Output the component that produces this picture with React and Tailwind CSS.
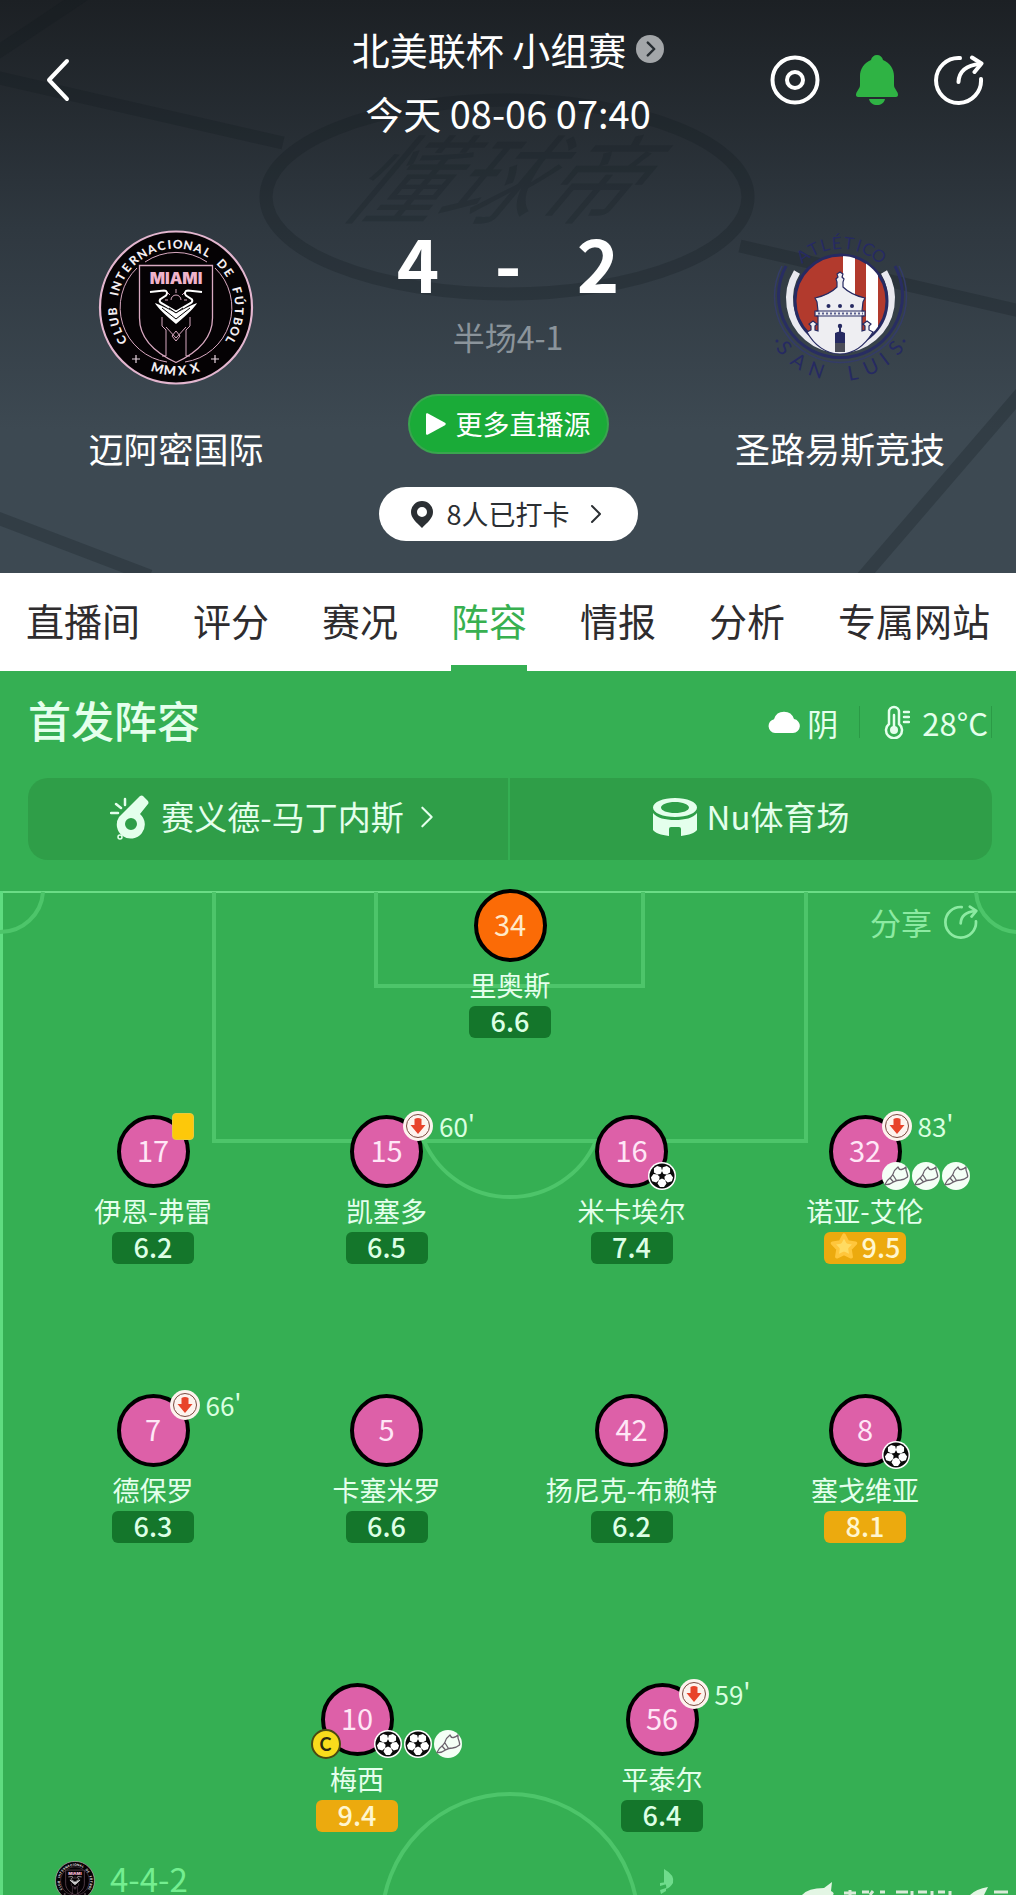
import clsx from 'clsx';

const TABS = ['直播间', '评分', '赛况', '阵容', '情报', '分析', '专属网站'];

const GOALKEEPER = { number: 34, name: '里奥斯', rating: '6.6', keeper: true };

const DEFENDERS = [
  { number: 17, name: '伊恩-弗雷', rating: '6.2', yellowCard: true },
  { number: 15, name: '凯塞多', rating: '6.5', subOff: "60'" },
  { number: 16, name: '米卡埃尔', rating: '7.4', events: ['goal'] },
  { number: 32, name: '诺亚-艾伦', rating: '9.5', best: true, high: true, subOff: "83'", events: ['assist', 'assist', 'assist'] },
];

const MIDFIELDERS = [
  { number: 7, name: '德保罗', rating: '6.3', subOff: "66'" },
  { number: 5, name: '卡塞米罗', rating: '6.6' },
  { number: 42, name: '扬尼克-布赖特', rating: '6.2' },
  { number: 8, name: '塞戈维亚', rating: '8.1', high: true, events: ['goal'] },
];

const FORWARDS = [
  { number: 10, name: '梅西', rating: '9.4', high: true, captain: true, events: ['goal', 'goal', 'assist'] },
  { number: 56, name: '平泰尔', rating: '6.4', subOff: "59'" },
];

const NARROW = { I: 0.6, ' ': 0.9, L: 0.9 };

// Spreads letters over an arc; angles are degrees from 12 o'clock
const RingText = ({ text, cx, cy, r, from, to, size, fill, weight = 900, bottom = false }) => {
  const chars = text.split('');
  const widths = chars.map((c) => NARROW[c] || 1);
  const total = widths.reduce((a, b) => a + b, 0) - (widths[0] + widths[widths.length - 1]) / 2;
  let pos = -widths[0] / 2;
  return (
    <g fill={fill} fontSize={size} fontWeight={weight} fontFamily="Lato, sans-serif" textAnchor="middle">
      {chars.map((c, i) => {
        const mid = pos + widths[i] / 2;
        pos += widths[i];
        const angle = from + ((to - from) * mid) / total;
        const turn = bottom ? -angle : angle;
        return (
          <text key={i} x={cx} y={bottom ? cy + r : cy - r} transform={`rotate(${turn} ${cx} ${cy})`}>
            {c}
          </text>
        );
      })}
    </g>
  );
};

const MiamiCrest = ({ className, small = false }) => (
  <svg viewBox="18 20 156 156" className={className} role="img" aria-label="迈阿密国际">
    <circle cx="96" cy="97.5" r="76" fill="#050204" stroke="#e3b6cf" strokeWidth="2.2" />
    <RingText text="CLUB INTERNACIONAL DE FÚTBOL" cx={96} cy={97.5} r={59} from={-121} to={121} size={12} fill="#f4eef2" />
    {!small && <RingText text="MMXX" cx={96} cy={97.5} r={68} from={-17} to={17} size={13} fill="#f4eef2" bottom />}
    <g fill="none" stroke="#d8a8c0" strokeWidth="1">
      <path d="M65 52a55 55 0 0 1 62 0" />
      <path d="M57 58a55 55 0 0 0 30 94" />
      <path d="M135 58a55 55 0 0 1-30 94" />
      <path d="M59.500 55.500h73V108c0 20-14 34-36.500 44.500C73.500 142 59.500 128 59.500 108Z" strokeWidth="1.3" />
      <path d="M82 107v9l4 4v26h-4M110 107v9l-4 4v26h4M86 117l10 11 10-11M96 121l4 5-4 5-4-5Z" />
      <path d="M91 90a5 5 0 1 1 10 0M96 83v-4M90 85l-3-3M102 85l3-3M88 90h-3M104 90h3" />
    </g>
    <text x="96" y="74" textAnchor="middle" fontSize="16" fontWeight="900" fontFamily="Inter, sans-serif" fill="#efb3cb">
      MIAMI
    </text>
    <path
      d="M70 82l14-1.500c3 0 4 3 2 5l-6 4c-1 2 0 3 2 4l14 8 14-8c2-1 3-2 2-4l-6-4c-2-2-1-5 2-5l14 1.500"
      fill="none"
      stroke="#fff"
      strokeWidth="2"
    />
    <path d="M75 93q3 6 21 21 18-15 21-21l-5 2-16 8-16-8Z" fill="#fff" />
    <path d="M82 98l14 11 14-11M89 98l7 5 7-5" fill="none" stroke="#050204" strokeWidth="1" />
    <path d="M56 145v8M52 149h8M135 145v8M131 149h8" stroke="#e8d5df" strokeWidth="1.200" />
  </svg>
);

const SanLuisCrest = ({ className }) => (
  <svg viewBox="13 20 156 156" className={className} role="img" aria-label="圣路易斯竞技">
    <defs>
      <clipPath id="san-luis-disc">
        <circle cx="92" cy="91" r="45" />
      </clipPath>
    </defs>
    <RingText text="ATLÉTICO" cx={92} cy={96} r={57} from={-37} to={37} size={17} weight={400} fill="#262a62" />
    <RingText text="SAN LUIS" cx={91} cy={91} r={80} from={-50} to={50} size={20} weight={400} fill="#262a62" bottom />
    <circle cx="28" cy="131" r="1.500" fill="#262a62" />
    <circle cx="155" cy="131" r="1.500" fill="#262a62" />
    <path d="M37 56a62 62 0 1 0 109 0" fill="none" stroke="#282d62" strokeWidth="3" />
    <path d="M33 56a66 66 0 1 0 117 0" fill="none" stroke="#343c68" strokeWidth="1.500" />
    <path d="M48 62a51 51 0 1 0 87 0" fill="none" stroke="#e9e9ef" strokeWidth="7" />
    <circle cx="92" cy="91" r="46" fill="#b23a2d" stroke="#262a62" strokeWidth="3" />
    <g clipPath="url(#san-luis-disc)">
      <path d="M94 40h12v100H94zM117 40h12v100h-12z" fill="#fff" />
    </g>
    <path
      d="M88 77v-5l-1-3 2-2-1-3 3-2 3 2-1 3 2 2-1 3v5c6 6 13 9 22 11l-2 4-1 9h3v5h-3v15l3-1v-4l-2-2 4-3 4 3-2 2v4l4 2c-8 13-19 22-33 22s-26-9-33-22l4-2v-4l-2-2 4-3 4 3-2 2v4l3 1v-15h-3v-5h3l-1-9-2-4c9-2 16-5 22-11Z"
      fill="#eeeef2"
      stroke="#262a62"
      strokeWidth="1.200"
    />
    <path d="M67 101h48M67 106h48" stroke="#262a62" strokeWidth="1" />
    <path d="M69 103.500h45" stroke="#5b6090" strokeWidth="2" strokeDasharray="2 2" />
    <g fill="#262a62">
      <circle cx="79.500" cy="96" r="2" />
      <circle cx="91" cy="96" r="2" />
      <circle cx="103" cy="96" r="2" />
      <circle cx="91" cy="116" r="2.200" />
      <path d="M90 117h2v5h-2zM86 123q5-3 10 0v10H86z" />
    </g>
    <path d="M86 133h10v9H86z" fill="#4a4c58" />
  </svg>
);

const ShareIcon = ({ className }) => (
  <svg viewBox="0 0 50 50" className={className} fill="none" stroke="currentColor" strokeWidth="4" strokeLinecap="round" aria-hidden="true">
    <path d="M26 3A22.500 22.500 0 1 0 47 24" />
    <path d="M24.500 27C25 17 32 10 46 9" strokeLinejoin="round" />
    <path d="M38 2.500l9.500 6-7 8.500" strokeLinejoin="round" />
  </svg>
);

const Chevron = ({ className, width = 2 }) => (
  <svg viewBox="0 0 12 20" className={className} fill="none" stroke="currentColor" strokeWidth={width} strokeLinecap="round" strokeLinejoin="round" aria-hidden="true">
    <path d="M2 2l8 8-8 8" />
  </svg>
);

const HeaderBackdrop = () => (
  <svg
    viewBox="0 0 1016 573"
    preserveAspectRatio="xMidYMid slice"
    className="absolute inset-0 size-full"
    fill="none"
    stroke="#10181d"
    strokeOpacity="0.24"
    strokeWidth="13"
    aria-hidden="true"
  >
    <ellipse cx="507" cy="197" rx="241" ry="97" />
    <path d="M-5 54L85-6M-5 77L283 143M740 246L1020 311M-5 517L150 576M1022 392L862 578" />
    <text x="335" y="216" transform="skewX(-40)" style={{ transformOrigin: '335px 216px' }} fontSize="96" fill="#10181d" fillOpacity="0.2" stroke="none">
      懂球帝
    </text>
  </svg>
);

const TeamColumn = ({ name, children }) => (
  <div className="flex flex-col items-center">
    {children}
    <span className="mt-9 text-[35px] leading-[52px] whitespace-nowrap text-white">{name}</span>
  </div>
);

const MatchHeader = () => (
  <header className="relative overflow-hidden bg-linear-to-b from-[#1c2024] via-[#2f3840] via-40% to-[#3d4952] to-75% text-white">
    <HeaderBackdrop />
    <div className="relative grid grid-cols-[1fr_auto_1fr] pt-[21px]">
      <div className="pt-[34px] pl-[42px]">
        <button aria-label="返回" className="flex h-[50px] w-8 items-center justify-center">
          <svg viewBox="0 0 24 46" className="h-[46px] w-6" fill="none" stroke="currentColor" strokeWidth="4" strokeLinecap="round" strokeLinejoin="round" aria-hidden="true">
            <path d="M21 4L3 23l18 19" />
          </svg>
        </button>
      </div>
      <div className="flex flex-col items-center">
        <h1>
          <a href="#competition" className="flex items-center gap-2.5 text-[38px] leading-14 whitespace-nowrap">
            北美联杯 小组赛
            <span className="flex size-7 items-center justify-center rounded-full bg-[#a3a6a9] text-[#262c31]">
              <Chevron className="ml-0.5 h-4 w-3" width={3} />
            </span>
          </a>
        </h1>
        <time className="mt-1 text-[38px] leading-16 whitespace-nowrap">今天 08-06 07:40</time>
      </div>
      <div className="flex items-start justify-end gap-8 pt-[34px] pr-8">
        <button aria-label="直播">
          <svg viewBox="0 0 50 50" className="size-[50px]" fill="none" stroke="currentColor" strokeWidth="4" aria-hidden="true">
            <circle cx="25" cy="25" r="22.500" />
            <circle cx="25" cy="25" r="8" />
          </svg>
        </button>
        <button aria-label="提醒" className="text-[#2fb344]">
          <svg viewBox="0 0 50 50" className="size-[50px]" fill="currentColor" aria-hidden="true">
            <path d="M25 0c3 0 5.500 2 6 5 7 3 11 9 11 16v9c0 4 4 6 4 10 0 1-1 2-2 2H6c-1 0-2-1-2-2 0-4 4-6 4-10v-9C8 14 12 8 19 5c.5-3 3-5 6-5Z" />
            <path d="M17 44h16c-1 4-4 6-8 6s-7-2-8-6Z" />
          </svg>
        </button>
        <button aria-label="分享比赛">
          <ShareIcon className="size-[50px]" />
        </button>
      </div>
    </div>

    <div className="relative grid grid-cols-3 px-2.5 pt-[85px] pb-8">
      <TeamColumn name="迈阿密国际">
        <MiamiCrest className="size-[156px]" />
      </TeamColumn>
      <div className="flex flex-col items-center">
        <div className="grid w-[270px] grid-cols-3 text-center text-[72px] leading-16 font-bold">
          <span>4</span>
          <span>-</span>
          <span>2</span>
        </div>
        <p className="mt-[18px] text-[32px] leading-12 text-[#8b949b]">半场4-1</p>
        <button className="mt-[34px] flex h-[60px] items-center gap-2.5 rounded-full border-2 border-[#3aa54f] bg-[#1aab38] px-4 text-[27px] whitespace-nowrap">
          <svg viewBox="0 0 20 22" className="h-[22px] w-5" fill="currentColor" aria-hidden="true">
            <path d="M0 1.500C0 .3 1 0 2 .5l17 9.300c1 .6 1 1.800 0 2.400L2 21.500c-1 .5-2 .2-2-1Z" />
          </svg>
          更多直播源
        </button>
        <button className="mt-[33px] flex h-[54px] items-center rounded-full bg-white px-8 text-[27px] whitespace-nowrap text-[#2b2f33]">
          <svg viewBox="0 0 22 27" className="mr-3.5 h-[27px] w-[22px]" aria-hidden="true">
            <path fillRule="evenodd" d="M11 0a11 11 0 0 1 11 11c0 6-5 10-11 16C5 21 0 17 0 11A11 11 0 0 1 11 0Zm0 6a5 5 0 1 0 0 10 5 5 0 0 0 0-10Z" fill="currentColor" />
          </svg>
          8人已打卡
          <Chevron className="mr-1 ml-5 h-5 w-3" />
        </button>
      </div>
      <TeamColumn name="圣路易斯竞技">
        <SanLuisCrest className="size-[156px]" />
      </TeamColumn>
    </div>
  </header>
);

const TabBar = () => (
  <nav className="flex h-[98px] justify-between bg-white px-[26px]">
    {TABS.map((tab) => (
      <a
        key={tab}
        href={`#${tab}`}
        className={clsx(
          'flex items-center border-b-6 text-[38px] whitespace-nowrap',
          tab === '阵容' ? 'border-b-[#35af53] text-[#38b050]' : 'border-b-transparent text-[#2e2c2e]'
        )}
      >
        {tab}
      </a>
    ))}
  </nav>
);

const LineupHeader = () => (
  <div className="pr-6 pl-7 text-[#e4ffec]">
    <div className="flex h-[102px] items-center justify-between">
      <h2 className="pb-1.5 text-[43px] leading-none font-medium">首发阵容</h2>
      <div className="flex items-center text-[31px] leading-none">
        <svg viewBox="0 0 32 22" className="mr-[7px] h-[22px] w-8" fill="#fff" aria-hidden="true">
          <path d="M7 22a7 7 0 0 1-1-13.800A10.500 10.500 0 0 1 26 8.100 7 7 0 0 1 25 22Z" />
        </svg>
        阴
        <span className="ml-[21px] h-8 w-px bg-[#2b9a46]" />
        <svg viewBox="0 0 26 34" className="mr-3 ml-6 h-[34px] w-[26px]" fill="none" stroke="currentColor" strokeWidth="2.500" strokeLinecap="round" aria-hidden="true">
          <path d="M5 19V7a5 5 0 0 1 10 0v12a8 8 0 1 1-10 0Z" />
          <circle cx="10" cy="25" r="4" fill="currentColor" stroke="none" />
          <path d="M10 24V10M20 7h5M20 12h5M20 17h5" />
        </svg>
        28°C
        <span className="ml-[3px] h-8 w-px bg-[#2b9a46]" />
      </div>
    </div>
    <div className="mt-[5px] grid h-[82px] grid-cols-2 divide-x-2 divide-[#35af53] overflow-hidden rounded-[20px] bg-[#2f9e48] text-[33px]">
      <a href="#referee" className="flex items-center justify-center pb-1 pl-2 whitespace-nowrap">
        <svg viewBox="0 0 39 45" className="mr-3 h-[45px] w-[39px]" aria-hidden="true">
          <path fillRule="evenodd" d="M30 1q2-1 3 0l5 5q1 2 0 3L30 19a14 14 0 1 1-21 3Zm-9 22a6 6 0 1 0 0 12 6 6 0 0 0 0-12Z" fill="currentColor" />
          <circle cx="10" cy="42" r="2" fill="none" stroke="currentColor" strokeWidth="1.500" />
          <path d="M1 18h7M6 9l5 4M15 4v6" stroke="currentColor" strokeWidth="2.500" strokeLinecap="round" />
        </svg>
        赛义德-马丁内斯
        <Chevron className="ml-4 h-6 w-3.5" width={1.8} />
      </a>
      <a href="#stadium" className="flex items-center justify-center gap-2.5 pb-1 whitespace-nowrap">
        <svg viewBox="0 0 44 38" className="h-[38px] w-11" fill="currentColor" aria-hidden="true">
          <path fillRule="evenodd" d="M22 0c12 0 22 4 22 9.500S34 19 22 19 0 15 0 9.500 10 0 22 0Zm0 4C14 4 8 6.500 8 9.500S14 15 22 15s14-2.500 14-5.500S30 4 22 4Z" />
          <path d="M0 15c4 5 12 7 22 7s18-2 22-7v17c-2 3-8 5-16 6v-7q0-2-2-2h-8q-2 0-2 2v7C8 37 2 35 0 32Z" />
        </svg>
        Nu体育场
      </a>
    </div>
  </div>
);

const PitchLines = () => (
  <svg
    viewBox="0 0 1016 1006"
    preserveAspectRatio="xMidYMin slice"
    className="absolute inset-0 size-full"
    fill="none"
    stroke="#4dc56a"
    strokeWidth="4"
    aria-hidden="true"
  >
    <path d="M0 3h1016" stroke="#6bdc86" strokeWidth="2" />
    <path d="M1.500 2v1004" stroke="#5fdc80" strokeWidth="3" />
    <path d="M214 3v249h592V3M376 3v94h267V3" />
    <path d="M424 252a94 94 0 0 0 172 0" />
    <path d="M43 3a43 43 0 0 1-43 40M976 3a43 43 0 0 0 43 40" />
    <circle cx="510" cy="1033" r="128" />
  </svg>
);

const SubOffIcon = () => (
  <svg viewBox="0 0 30 30" className="size-[30px] shrink-0" role="img" aria-label="换下">
    <circle cx="15" cy="15" r="15" fill="#fdf3ee" />
    <circle cx="15" cy="15" r="11.500" fill="none" stroke="#7a4a40" strokeWidth="1" />
    <path d="M11.500 8q3.500-2 7 0v6h4L15 23l-7.500-9h4Z" fill="#e8432a" />
  </svg>
);

const GoalIcon = () => (
  <svg viewBox="0 0 28 28" className="size-7" role="img" aria-label="进球">
    <circle cx="14" cy="14" r="14" fill="#fff" />
    <circle cx="14" cy="14" r="12.500" fill="#0b0b0b" />
    <g fill="#fff">
      {[36, 108, 180, 252, 324].map((angle) => (
        <path key={angle} d="M12 3h4l2.500 3.500-1.500 3.500-3 1.500-3-1.500-1.500-3.500Z" transform={`rotate(${angle} 14 14)`} />
      ))}
    </g>
  </svg>
);

const AssistIcon = () => (
  <svg viewBox="0 0 28 28" className="size-7" role="img" aria-label="助攻">
    <circle cx="14" cy="14" r="14" fill="#f4fff6" />
    <path
      d="M3 22.500Q5 18 9 15q1-1 2-3 1-4 5-7 1 3 3.500 2.500Q22 7 24 5q-.5 3 1 6 1 3 .5 4-3 2.500-7 3-4 0-7 2-4 3-8.500 2.500ZM8 16l3.500 4M11 13l3.500 5.500"
      fill="none"
      stroke="#6b636d"
      strokeWidth="1.300"
      strokeLinejoin="round"
    />
  </svg>
);

const StarIcon = () => (
  <svg viewBox="0 0 28 26" className="h-[26px] w-7" role="img" aria-label="全场最佳">
    <path
      d="M14 2l3.700 7 7.800 1.300-5.500 5.700 1.200 7.800L14 20.400l-7.200 3.400L8 16l-5.500-5.700L10.300 9Z"
      fill="#ffdb62"
      stroke="#ffc63c"
      strokeWidth="3.500"
      strokeLinejoin="round"
    />
  </svg>
);

const Player = ({ player }) => {
  const { number, name, rating, keeper, high, best, captain, yellowCard, subOff, events = [] } = player;

  return (
    <div className="flex flex-col items-center">
      <div className="relative">
        <div
          className={clsx(
            'flex size-[73px] items-center justify-center rounded-full border-4 border-black pb-1 text-[29px] leading-none',
            keeper ? 'bg-[#fb6b06] text-[#ffe9c8]' : 'bg-[#dd60a8] text-[#ffe6f6]'
          )}
        >
          {number}
        </div>
        {yellowCard && <span className="absolute -top-0.5 left-[55px] h-[27px] w-[22px] rounded-[4px] border border-[#e9c93c] bg-[#fdc80a]" />}
        {subOff && (
          <div className="absolute -top-1 left-[53px] flex items-center gap-1.5 text-[26px] leading-[30px] text-[#d9ffe0]">
            <SubOffIcon />
            {subOff}
          </div>
        )}
        {captain && (
          <span className="absolute top-[46px] -left-2.5 flex size-[30px] items-center justify-center rounded-full border-2 border-[#4a4a12] bg-[#f9dc1c] font-[Lato,sans-serif] text-lg leading-none font-bold text-[#2c2810]">
            C
          </span>
        )}
        {events.length > 0 && (
          <div className="absolute top-[47px] left-[53px] flex gap-0.5">
            {events.map((event, i) => (event === 'goal' ? <GoalIcon key={i} /> : <AssistIcon key={i} />))}
          </div>
        )}
      </div>
      <span className="pt-px text-[27px] leading-[43px] whitespace-nowrap text-[#e4ffec]">{name}</span>
      <span
        className={clsx(
          'flex h-8 w-[82px] items-center justify-center gap-1 rounded-md pb-1 text-[27px] leading-none font-medium',
          high ? 'bg-[#ecaa0e] text-[#fff6cf]' : 'bg-[#14762b] text-[#dcffe5]'
        )}
      >
        {best && <StarIcon />}
        {rating}
      </span>
    </div>
  );
};

const PlayerRow = ({ players }) => (
  <div className="grid grid-cols-[222fr_245fr_245fr_222fr] pr-10 pl-[42px]">
    {players.map((player) => (
      <Player key={player.number} player={player} />
    ))}
  </div>
);

const Pitch = () => (
  <section className="relative mt-[29px] overflow-hidden">
    <PitchLines />
    <button className="absolute top-3.5 right-[38px] flex items-center gap-3 text-[31px] leading-[38px] text-[#8ceaa2]">
      分享
      <ShareIcon className="size-[34px]" />
    </button>
    <div className="relative flex flex-col">
      <div className="flex justify-center pl-1">
        <Player player={GOALKEEPER} />
      </div>
      <div className="mt-[77px]">
        <PlayerRow players={DEFENDERS} />
      </div>
      <div className="mt-[130px]">
        <PlayerRow players={MIDFIELDERS} />
      </div>
      <div className="mt-[140px] flex justify-center gap-[60px] pl-[3px]">
        {FORWARDS.map((player) => (
          <div key={player.number} className="w-[245px]">
            <Player player={player} />
          </div>
        ))}
      </div>
      <div className="mt-[29px] flex h-[34px] items-start justify-between overflow-hidden pl-[55px]">
        <div className="flex items-start gap-[15px] text-[33px] leading-[34px] text-[#74ee90]">
          <MiamiCrest className="size-10" small />
          4-4-2
        </div>
        <svg viewBox="0 0 360 34" className="h-[34px] w-[360px]" aria-hidden="true">
          <path d="M8 8q11 6 9 14-3 5-7 6 1-5-2-6ZM4 22l7-1v2l-7 2ZM4 29l6-2v3l-5 3Z" fill="#6fdc8c" />
          <path d="M146 34q6-7 22-7l8-6-1 9q4 2 2 4Z" fill="#e3f6e4" />
          <g stroke="#d9ecd9" strokeWidth="3">
            <path d="M188 32h12M194 29v5M206 31h7M217 30l-3 4M224 31h5M240 31h12M256 30v4M262 31h9M276 30v4M282 31h7M294 30v4M338 31h14" />
          </g>
          <path d="M314 34q6-6 18-8l-4 8Z" fill="#e3f6e4" />
        </svg>
      </div>
    </div>
  </section>
);

const App = () => {
  return (
    <main className="w-full overflow-hidden bg-[#35af53] font-['Noto_Sans_CJK_SC',sans-serif]" lang="zh-CN">
      <MatchHeader />
      <TabBar />
      <LineupHeader />
      <Pitch />
    </main>
  );
};

export default App;
